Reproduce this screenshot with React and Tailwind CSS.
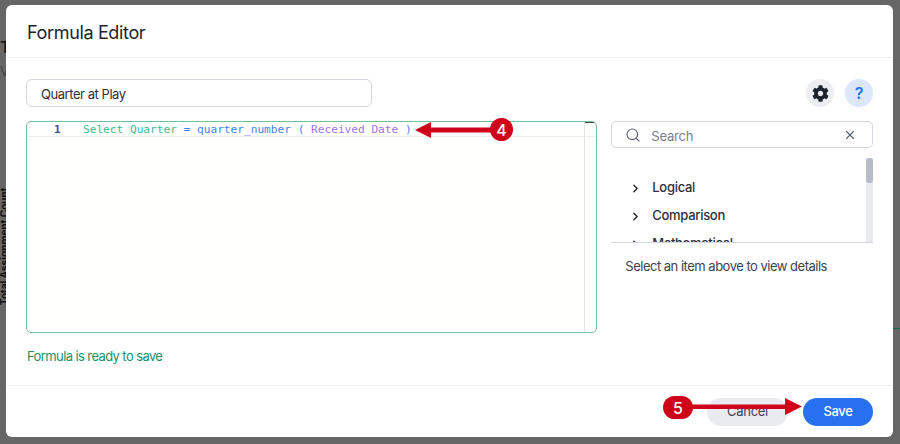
import React from "react";
import { Search, X, ChevronRight } from "lucide-react";
import { FaCog } from "react-icons/fa";

function Category({ label }) {
  return (
    <div className="flex h-7 shrink-0 items-center">
      <ChevronRight size={13} strokeWidth={2.5} className="ml-[18px] text-[#1d232f]" />
      <span className="ml-[10px] text-[13px] font-medium tracking-[-0.3px] text-[#2b303c]">{label}</span>
    </div>
  );
}

function Badge({ n, className }) {
  return (
    <div className={"absolute flex items-center justify-center rounded-full bg-[#d0021b] text-[16px] font-medium text-white " + className}>
      {n}
    </div>
  );
}

export default function App() {
  return (
    <div
      className="relative h-[444px] w-[900px] overflow-hidden bg-[#666666] pb-[7px] pl-[6px] pr-[7px] pt-[5px] text-[#1d232f]"
      style={{ fontFamily: "Inter, 'Liberation Sans', sans-serif" }}
    >
      {/* chart fragments peeking out from behind the modal */}
      <span className="absolute left-0 top-[35px] text-[16px] font-medium text-[#111]">T</span>
      <span className="absolute left-0 top-[62px] text-[13px] text-[#444]">V</span>
      <span className="absolute left-[6px] top-[305px] origin-top-left -rotate-90 whitespace-nowrap text-[10px] font-bold leading-none text-[#111]">
        <span className="relative top-[-7px]">Total Assignment Count</span>
      </span>
      <div className="absolute right-0 top-[328px] h-px w-[7px] bg-[#0f6b50]" />

      <div className="relative flex h-full flex-col rounded-[6px] bg-white">
        <header className="flex h-[53px] shrink-0 items-center border-b border-[#eeeff2] pl-[21px] pt-1">
          <h1 className="text-[18px] font-normal leading-none tracking-[-0.35px] text-[#1d232f]">Formula Editor</h1>
        </header>

        <div className="flex min-h-0 flex-1 flex-col border-b border-[#eeeff2] pl-5 pr-5 pt-[21px]">
          <div className="flex h-[28px] shrink-0 items-center justify-between">
            <div className="flex h-full w-[346px] items-center rounded-[6px] border border-[#d3d6df] pl-[14px] pt-[3px] text-[13px] tracking-[-0.45px] text-[#2b303c]">
              Quarter at Play
            </div>
            <div className="flex gap-[11px]">
              <div className="flex h-7 w-7 items-center justify-center rounded-full bg-[#eceef2]">
                <FaCog size={17} className="text-[#1d232f]" />
              </div>
              <div className="flex h-7 w-7 items-center justify-center rounded-full bg-[#dde7fb] text-[16px] font-semibold text-[#2770ef]">
                ?
              </div>
            </div>
          </div>

          <div className="mt-[14px] flex shrink-0 gap-[14px]">
            <div className="relative h-[212px] w-[572px] overflow-hidden rounded-[5px] border-[1.5px] border-[#74bf9e] bg-[#fffffd]">
              <div
                className="flex h-[15px] items-center border-b border-[#eeeeee] pt-[2px] text-[11.15px] leading-none"
                style={{ fontFamily: "'DejaVu Sans Mono', monospace" }}
              >
                <span className="ml-[27px] w-[29px] font-bold text-[#3d4f9c]">1</span>
                <span className="whitespace-pre">
                  <span className="text-[#35c28f]">Select Quarter </span>
                  <span className="text-[#3f83f0]">= quarter_number ( </span>
                  <span className="text-[#a176f0]">Received Date </span>
                  <span className="text-[#3f83f0]">)</span>
                </span>
              </div>
              <div className="absolute bottom-0 right-[11px] top-0 w-px bg-[#e3e3e3]" />
              <div className="absolute right-0 top-0 h-px w-[11px] bg-[#444]" />
            </div>

            <div className="flex h-[212px] w-[262px] flex-col">
              <div className="flex h-[27px] shrink-0 items-center rounded-[5px] border border-[#d3d6df] pl-[13px] pr-[15px]">
                <Search size={16} strokeWidth={1.7} className="text-[#5b6272]" />
                <span className="ml-[10px] flex-1 pt-1 text-[13px] tracking-[-0.2px] text-[#7a8090]">Search</span>
                <X size={14} strokeWidth={2} className="text-[#5b6272]" />
              </div>
              <div className="relative mt-[10px] flex h-[85px] shrink-0 flex-col overflow-hidden border-b border-[#d3d6df] pt-4">
                <Category label="Logical" />
                <Category label="Comparison" />
                <Category label="Mathematical" />
                <div className="absolute bottom-0 right-0 top-0 w-[7px] bg-[#e9ebf1]">
                  <div className="h-[25px] rounded-[3px] bg-[#b8bcc7]" />
                </div>
              </div>
              <p className="ml-[14px] mt-[15px] text-[13px] leading-4 tracking-[-0.5px] text-[#3c4250]">Select an item above to view details</p>
            </div>
          </div>

          <p className="ml-px mt-[15px] text-[13px] leading-4 tracking-[-0.6px] text-[#1e8f68]">Formula is ready to save</p>
        </div>

        <footer className="flex h-[51px] shrink-0 items-start justify-end gap-[15px] pr-[20px] pt-[12px]">
          <div className="flex h-[28px] w-[81px] items-center justify-center rounded-full bg-[#e9ebf1] text-[13px] tracking-[-0.3px] text-[#3c4250]">
            Cancel
          </div>
          <div className="flex h-[28px] w-[70px] items-center justify-center rounded-full bg-[#2770ef] text-[13px] font-medium tracking-[-0.4px] text-white">
            Save
          </div>
        </footer>
      </div>

      {/* annotations */}
      <svg className="absolute left-0 top-0" width="900" height="444" viewBox="0 0 900 444" fill="#d0021b">
        <path d="M415 130 L431 122 L431 127.5 L495 127.5 L495 132.5 L431 132.5 L431 138 Z" />
        <path d="M690 404.5 L785 404.5 L785 398 L802 406.5 L785 415 L785 409 L690 409 Z" />
      </svg>
      <Badge n="4" className="left-[490px] top-[118px] h-[23px] w-[23px]" />
      <Badge n="5" className="left-[663px] top-[396px] h-[23px] w-[30px]" />
    </div>
  );
}
